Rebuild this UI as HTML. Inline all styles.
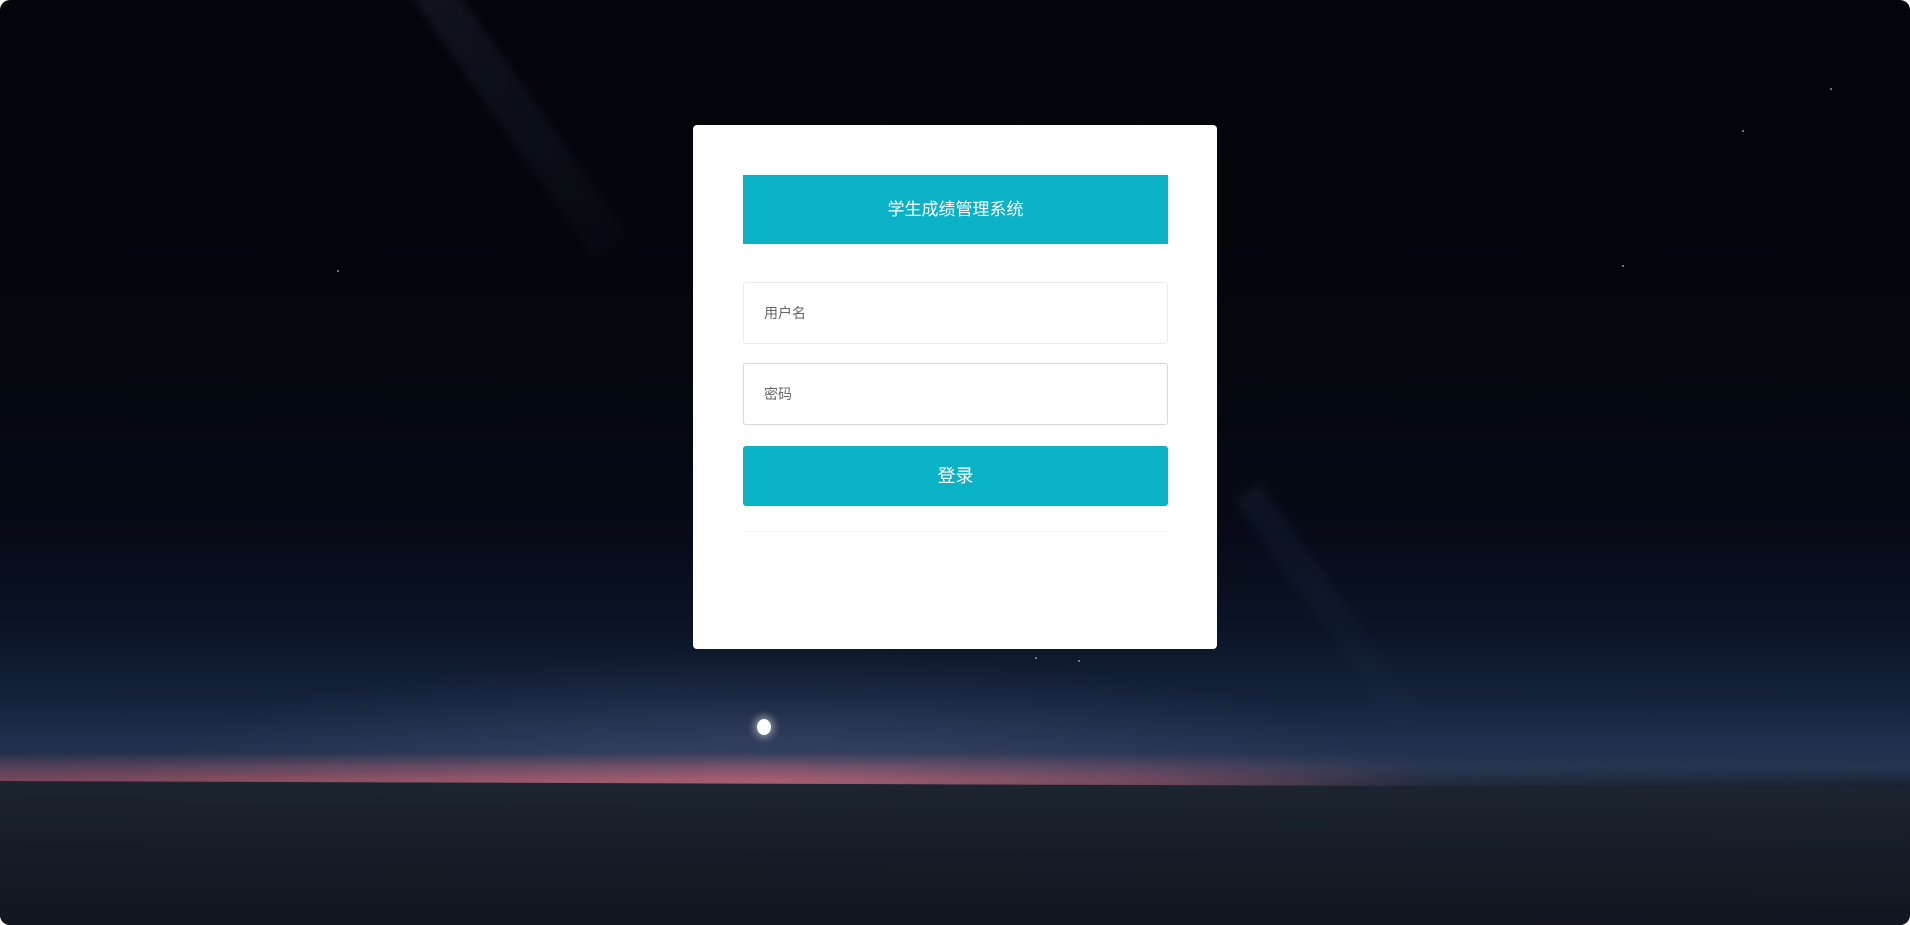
<!DOCTYPE html>
<html><head><meta charset="utf-8">
<style>
html,body{margin:0;padding:0;width:1910px;height:925px;overflow:hidden;background:#fff;}
.bg{position:absolute;left:0;top:0;width:1910px;height:925px;border-radius:10px;overflow:hidden;
background:linear-gradient(to bottom,#03050a 0%,#04070e 40%,#060b17 58%,#0b1426 68%,#142139 75%,#1f2e4a 80%,#26344f 83%,#1a2230 85%);}
.glow{position:absolute;left:100px;top:560px;width:1400px;height:260px;background:radial-gradient(ellipse 45% 50% at 48% 85%,rgba(110,110,150,0.3),rgba(0,0,0,0) 100%);}
.pink{position:absolute;left:0;top:752px;width:1910px;height:34px;background:linear-gradient(to right,rgba(190,95,115,0.55),rgba(205,105,120,0.75) 40%,rgba(200,105,125,0.45) 60%,rgba(60,70,100,0.2) 75%,rgba(0,0,0,0));
-webkit-mask-image:linear-gradient(to bottom,rgba(0,0,0,0),#000 80%);mask-image:linear-gradient(to bottom,rgba(0,0,0,0),#000 80%);}
.ground{position:absolute;left:-10px;top:781px;width:1930px;height:160px;background:linear-gradient(to bottom,#1c2430,#161d28 40%,#10151e);transform:rotate(0.2deg);transform-origin:0 0;}
.moon{position:absolute;left:757px;top:719px;width:14px;height:16px;border-radius:50%;background:#fff;box-shadow:0 0 8px 3px rgba(255,255,255,0.45);}
.streak{position:absolute;left:400px;top:-20px;width:40px;height:340px;background:linear-gradient(to bottom,rgba(80,100,140,0.16),rgba(80,100,140,0.03));transform:rotate(-35deg);transform-origin:0 0;filter:blur(4px);}
.streak2{position:absolute;left:1235px;top:500px;width:30px;height:280px;background:linear-gradient(to bottom,rgba(80,100,140,0.10),rgba(80,100,140,0.02));transform:rotate(-35deg);transform-origin:0 0;filter:blur(4px);}
.card{position:absolute;left:693px;top:125px;width:524px;height:524px;background:#fff;border-radius:4px;}
.title{position:absolute;left:50px;top:50px;width:425px;height:69px;background:#0bb2c6;color:#fff;font:17px "Liberation Sans","Noto Sans CJK SC",sans-serif;text-align:center;line-height:69px;}
.inp{position:absolute;left:50px;height:60px;border:1px solid #ececec;border-radius:3px;font:14px "Liberation Sans","Noto Sans CJK SC",sans-serif;color:#666;line-height:60px;padding-left:20px;width:403px;}
.inp2{border-color:#d8d8d8;}
.btn{position:absolute;left:50px;top:321px;width:425px;height:60px;background:#0bb2c6;border-radius:3px;color:#fff;font:18px "Liberation Sans","Noto Sans CJK SC",sans-serif;text-align:center;line-height:60px;}
.line{position:absolute;left:50px;top:406px;width:425px;height:1px;background:#f2f2f2;}
.star{position:absolute;width:2px;height:2px;background:#8899aa;border-radius:50%;}
</style></head><body>
<div class="bg">
<div class="glow"></div>
<div class="streak"></div>
<div class="streak2"></div>
<div class="pink"></div>
<div class="ground"></div>
<div class="moon"></div>
<div class="star" style="left:1830px;top:88px"></div>
<div class="star" style="left:337px;top:270px"></div>
<div class="star" style="left:1035px;top:657px"></div>
<div class="star" style="left:1078px;top:660px"></div>
<div class="star" style="left:1742px;top:130px"></div>
<div class="star" style="left:1622px;top:265px"></div>
</div>
<div class="card">
<div class="title">学生成绩管理系统</div>
<div class="inp" style="top:157px">用户名</div>
<div class="inp inp2" style="top:238px">密码</div>
<div class="btn">登录</div>
<div class="line"></div>
</div>
</body></html>
